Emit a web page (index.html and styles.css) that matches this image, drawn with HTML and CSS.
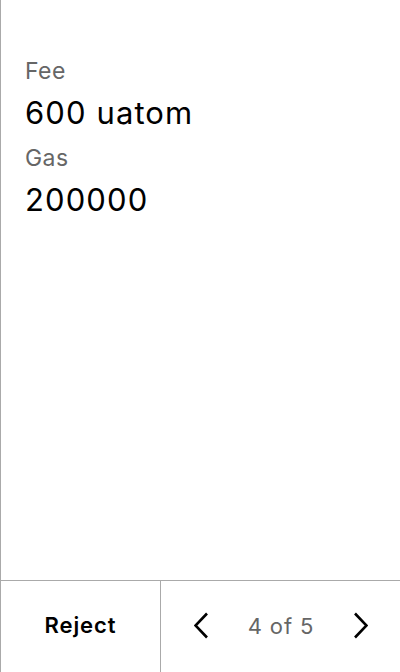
FILE: index.html
```html
<!DOCTYPE html>
<html>
<head>
<meta charset="utf-8">
<link rel="stylesheet" href="styles.css">
</head>
<body>
<div class="screen">
  <main class="content">
    <div class="field">
      <div class="label">Fee</div>
      <div class="value">600 uatom</div>
    </div>
    <div class="field">
      <div class="label">Gas</div>
      <div class="value">200000</div>
    </div>
  </main>
  <footer class="footer">
    <div class="reject">Reject</div>
    <div class="pager">
      <svg class="chev" width="15" height="27" viewBox="0 0 15 27"><path d="M13 1.5 L1.5 13.5 L13 25.5" fill="none" stroke="#000" stroke-width="2.6"/></svg>
      <span class="count">4 of 5</span>
      <svg class="chev" width="15" height="27" viewBox="0 0 15 27"><path d="M2 1.5 L13.5 13.5 L2 25.5" fill="none" stroke="#000" stroke-width="2.6"/></svg>
    </div>
  </footer>
</div>
</body>
</html>
```
FILE: styles.css
```css
html, body {
  margin: 0;
  padding: 0;
  background: #fff;
}
body {
  font-family: Inter, "Noto Sans", sans-serif;
  color: #000;
}
.screen {
  width: 400px;
  height: 672px;
  box-sizing: border-box;
  border-left: 1px solid #aaaaaa;
  display: flex;
  flex-direction: column;
}
.content {
  flex: 1;
  padding: 57px 24px 0 24px;
}
.field {
  display: flex;
  flex-direction: column;
  margin-bottom: 12px;
}
.label {
  font-size: 23px;
  line-height: 28px;
  letter-spacing: 0.4px;
  color: #666;
}
.value {
  font-size: 31px;
  line-height: 38px;
  letter-spacing: 1.1px;
  margin-top: 9px;
}
.footer {
  height: 92px;
  box-sizing: border-box;
  border-top: 1px solid #aaaaaa;
  display: flex;
}
.reject {
  width: 159px;
  border-right: 1px solid #aaaaaa;
  display: flex;
  align-items: center;
  justify-content: center;
  padding-bottom: 3px;
  font-size: 22px;
  font-weight: 600;
  letter-spacing: 0.9px;
}
.pager {
  flex: 1;
  display: flex;
  align-items: center;
  justify-content: space-between;
  padding: 0 32px 2px 33px;
}
.count {
  font-size: 22px;
  letter-spacing: 0.9px;
  color: #666;
}
```
